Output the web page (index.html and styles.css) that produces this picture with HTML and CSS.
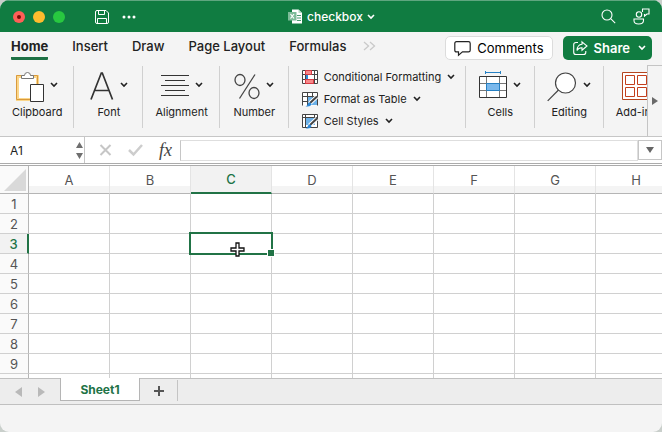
FILE: index.html
```html
<!DOCTYPE html>
<html lang="en">
<head>
<meta charset="utf-8">
<title>checkbox</title>
<link rel="stylesheet" href="styles.css">
</head>
<body>
<svg class="defs">
  <symbol id="chev" viewBox="0 0 8 6"><path d="M1 1l3 3 3-3" fill="none" stroke="currentColor" stroke-width="1.6"/></symbol>
</svg>
<div class="window">
  <header class="titlebar">
    <div class="lead">
      <div class="lights">
        <button class="light close" aria-label="Close"></button>
        <button class="light minimize" aria-label="Minimize"></button>
        <button class="light full" aria-label="Full screen"></button>
      </div>
      <div class="quick">
        <button class="bare" aria-label="Save"><svg width="14" height="14" viewBox="0 0 14 14" fill="none" stroke="#fff"><path d="M.5 2Q.5.5 2 .5h9L13.500 3v9q0 1.500-1.500 1.500H2Q.5 13.500.5 12zM3.500.5v4h6v-4M2.500 13.500v-5h9v5"/></svg></button>
        <button class="bare" aria-label="More"><svg width="14" height="4" viewBox="0 0 14 4" fill="#fff"><circle cx="2" cy="2" r="1.500"/><circle cx="7" cy="2" r="1.500"/><circle cx="12" cy="2" r="1.500"/></svg></button>
      </div>
    </div>
    <button class="doc bare">
      <svg width="15" height="15" viewBox="0 0 15 15"><path d="M4 .5h6.500L14 4v10.500H4z" fill="#fff"/><path d="M10.500.5V4H14" fill="#b9dcc8"/><path d="M9 6.500h4M9 9h4M9 11.500h4" stroke="#4b9b70"/><path d="M0 3h8.500v8.500H0z" fill="#7dbb98"/><path d="M2.500 5l3.500 4.500M6 5L2.500 9.500" stroke="#fff" stroke-width="1.200"/></svg>
      <span>checkbox</span>
      <svg class="chev" width="8" height="6"><use href="#chev"/></svg>
    </button>
    <div class="tools">
      <button class="bare" aria-label="Search"><svg width="15" height="15" viewBox="0 0 15 15" fill="none" stroke="#fff" stroke-width="1.100"><circle cx="6" cy="6" r="5"/><path d="M9.700 9.700l4.500 4.500"/></svg></button>
      <button class="bare" aria-label="Presence"><svg width="17" height="17" viewBox="0 0 17 17" fill="none" stroke="#fff" stroke-width="1.100"><circle cx="6" cy="6.500" r="2.700"/><path d="M1 11h9.500v1.500q0 3.500-4.800 3.500T1 12.500zM9.500 4V1H16v5h-2L11.500 8V6"/></svg></button>
    </div>
  </header>

  <div class="tabs">
    <nav class="tablist">
      <a href="#" class="active">Home</a><a href="#">Insert</a><a href="#">Draw</a><a href="#">Page Layout</a><a href="#">Formulas</a>
    </nav>
    <button class="bare overflow" aria-label="More tabs"><svg width="13" height="10" viewBox="0 0 13 10" fill="none" stroke="#c9c9c9" stroke-width="1.300"><path d="M1 1l4.500 4L1 9M7 1l4.500 4L7 9"/></svg></button>
    <div class="actions">
      <button class="comments"><svg width="17" height="15" viewBox="0 0 17 15" fill="none" stroke="#222" stroke-width="1.200"><path d="M2.500.7h12q1.700 0 1.700 1.700v6.800q0 1.700-1.700 1.700H8.500L4.500 14.200V10.900h-2Q.8 10.900.8 9.200V2.400Q.8.7 2.500.7z"/></svg><span>Comments</span></button>
      <button class="share"><svg width="15" height="14" viewBox="0 0 15 14" fill="none" stroke="#fff" stroke-width="1.100"><path d="M5 1.500H3Q.7 1.500.7 3.800v7.400q0 2.300 2.300 2.300h7.500q2.300 0 2.300-2.300V10M9 .8l5 4.200-5 4.200V6.700Q5.500 6.500 4 9.500 4.300 3.700 9 3.300z"/></svg><span>Share</span><svg class="chev" width="8" height="6"><use href="#chev"/></svg></button>
    </div>
  </div>

  <div class="ribbon">
    <div class="groups">
      <button class="group"><span class="icon"><svg width="28" height="32" viewBox="0 0 28 32"><path d="M1.500 5.500h20v23h-20z" fill="#fff" stroke="#fbd68a" stroke-width="3"/><path d="M.5 4.500h21v24H.5z" fill="none" stroke="#d99a3c"/><path d="M5.500 7.500v-3h3q0-3 3-3t3 3h3v3z" fill="#fff" stroke="#777"/><path d="M14.500 13.500h13v17h-13z" fill="#fff" stroke="#333"/></svg><svg class="chev" width="8" height="6"><use href="#chev"/></svg></span><span>Clipboard</span></button>
      <button class="group"><span class="icon"><svg width="24" height="32" viewBox="0 0 24 32" fill="none" stroke="#333" stroke-width="1.700"><path d="M1 28.500L11.300 2h1L22.500 28.500M4.800 19.500h14.300"/></svg><svg class="chev" width="8" height="6"><use href="#chev"/></svg></span><span>Font</span></button>
      <button class="group"><span class="icon"><svg width="28" height="32" viewBox="0 0 28 32" stroke="#333"><path d="M0 4.500h28M4 9.500h20M0 14.500h28M4 19.500h20M0 24.500h28"/></svg><svg class="chev" width="8" height="6"><use href="#chev"/></svg></span><span>Alignment</span></button>
      <button class="group"><span class="icon"><svg width="26" height="32" viewBox="0 0 26 32" fill="none" stroke="#444" stroke-width="1.300"><ellipse cx="6" cy="9" rx="5" ry="5.500"/><ellipse cx="20" cy="22" rx="5" ry="5.500"/><path d="M21 3.500L5.500 27.500"/></svg><svg class="chev" width="8" height="6"><use href="#chev"/></svg></span><span>Number</span></button>
      <div class="stack">
        <button class="line"><svg width="16" height="14" viewBox="0 0 16 14"><path d="M.5.5h15v13H.5z" fill="#fff"/><path d="M3.500.5h6v4h-6zM3.500 9.500h8v4h-8z" fill="#f58a8a" stroke="#d93a45"/><path d="M3 5h3v4H3z" fill="#2b88d8"/><path d="M.5.5h15v13H.5zM.5 4.500h15M.5 9.500h15M3.500.5v13M12.500.5v13" fill="none" stroke="#444"/><path d="M3.500.5h6v4h-6zM3.500 9.500h8v4h-8z" fill="#f58a8a" stroke="#d93a45"/></svg><span>Conditional Formatting</span><svg class="chev" width="8" height="6"><use href="#chev"/></svg></button>
        <button class="line"><svg width="16" height="15" viewBox="0 0 16 15"><path d="M.5.5h15v13H.5z" fill="#fff"/><path d="M5 5h10v8H5z" fill="#6cb1e8"/><path d="M.5 13.500V.5h15v13M.5 4.500h15M.5 9.500h6M5.500.5v13M10.500.5v5" fill="none" stroke="#444"/><path d="M15 4.500L7.500 11.500" stroke="#fff" stroke-width="4"/><path d="M15 4.500L8 11" stroke="#444" stroke-width="2"/><path d="M8.500 10.500q-3 0-3 2.500-.5 1-2 1.200 5 1 6-2z" fill="#2b88d8"/></svg><span>Format as Table</span><svg class="chev" width="8" height="6"><use href="#chev"/></svg></button>
        <button class="line"><svg width="16" height="15" viewBox="0 0 16 15"><path d="M.5.5h15v13H.5z" fill="#fff"/><path d="M4 4h9v7H4z" fill="#6cb1e8"/><path d="M.5 13.500V.5h15v13zM.5 3.500h15M3.500.5v13M12.500.5v4" fill="none" stroke="#444"/><path d="M15 4.500L7.500 11.500" stroke="#fff" stroke-width="4"/><path d="M15 4.500L8 11" stroke="#444" stroke-width="2"/><path d="M8.500 10.500q-3 0-3 2.500-.5 1-2 1.200 5 1 6-2z" fill="#2b88d8"/></svg><span>Cell Styles</span><svg class="chev" width="8" height="6"><use href="#chev"/></svg></button>
      </div>
      <button class="group"><span class="icon"><svg width="28" height="32" viewBox="0 0 28 32" fill="none"><path d="M.5 5.500h27v21H.5z" fill="#fff"/><path d="M7.500 12.500h13v7h-13z" fill="#7ab8ec"/><path d="M.5 12.500h27M.5 19.500h27M7.500 5.500v21M20.500 5.500v21" stroke="#777"/><path d="M.5 5.500h27v21H.5z" stroke="#333"/><path d="M7.500 12.500h13v7h-13zM6.500 1.500h15M6.500 0v3M21.500 0v3" stroke="#2580c3"/></svg><svg class="chev" width="8" height="6"><use href="#chev"/></svg></span><span>Cells</span></button>
      <button class="group"><span class="icon"><svg width="30" height="32" viewBox="0 0 30 32" stroke="#444" stroke-width="1.200"><circle cx="18.500" cy="12" r="10" fill="#fff"/><path d="M11.500 19L.7 29.800"/></svg><svg class="chev" width="8" height="6"><use href="#chev"/></svg></span><span>Editing</span></button>
      <button class="group addins"><span class="icon"><svg width="28" height="32" viewBox="0 0 28 32" fill="#fff" stroke="#c43e1c"><path d="M.5 1.500h27v27H.5z" stroke="#b5451f"/><path d="M3.500 4.500h9v9h-9zM15.500 4.500h9v9h-9zM3.500 16.500h9v9h-9zM15.500 16.500h9v9h-9z"/></svg></span><span>Add-ins</span></button>
    </div>
    <button class="scroller" aria-label="Scroll ribbon"><svg width="6" height="8" viewBox="0 0 6 8"><path d="M0 0l6 4-6 4z" fill="#6a6a6a"/></svg></button>
  </div>

  <div class="formula">
    <div class="namebox">
      <input value="A1" aria-label="Name box">
      <svg width="7" height="17" viewBox="0 0 7 17" fill="#6f6f6f"><path d="M3.500 0L7 6H0zM0 11h7l-3.500 6z"/></svg>
    </div>
    <div class="fx">
      <button class="bare" aria-label="Cancel"><svg width="13" height="12" viewBox="0 0 13 12" stroke="#c6c6c6" stroke-width="2"><path d="M1.500 1l10 10M11.500 1l-10 10"/></svg></button>
      <button class="bare" aria-label="Enter"><svg width="15" height="12" viewBox="0 0 15 12" fill="none" stroke="#cdcdcd" stroke-width="2.500"><path d="M1 6l4.500 4.500L14 1"/></svg></button>
      <button class="bare fxlabel">fx</button>
    </div>
    <input class="entry" aria-label="Formula">
    <button class="expand" aria-label="Expand formula bar"><svg width="8" height="6" viewBox="0 0 8 6"><path d="M0 0h8L4 6z" fill="#666"/></svg></button>
  </div>

  <main class="grid">
    <table>
      <thead><tr><th class="corner"><svg width="22" height="22" viewBox="0 0 22 22"><path d="M22 0v22H0z" fill="#d9d9d9"/></svg></th><th>A</th><th>B</th><th class="sel">C</th><th>D</th><th>E</th><th>F</th><th>G</th><th>H</th></tr></thead>
      <tbody>
        <tr><th>1</th><td></td><td></td><td></td><td></td><td></td><td></td><td></td><td></td></tr>
        <tr><th>2</th><td></td><td></td><td></td><td></td><td></td><td></td><td></td><td></td></tr>
        <tr><th class="sel">3</th><td></td><td></td><td class="current"><div class="selection"><i class="handle"></i><svg class="cursor" width="15" height="15" viewBox="0 0 15 15"><path d="M6 1h3v5h5v3H9v5H6V9H1V6h5z" fill="#fff" stroke="#111" stroke-width="1.300"/></svg></div></td><td></td><td></td><td></td><td></td><td></td></tr>
        <tr><th>4</th><td></td><td></td><td></td><td></td><td></td><td></td><td></td><td></td></tr>
        <tr><th>5</th><td></td><td></td><td></td><td></td><td></td><td></td><td></td><td></td></tr>
        <tr><th>6</th><td></td><td></td><td></td><td></td><td></td><td></td><td></td><td></td></tr>
        <tr><th>7</th><td></td><td></td><td></td><td></td><td></td><td></td><td></td><td></td></tr>
        <tr><th>8</th><td></td><td></td><td></td><td></td><td></td><td></td><td></td><td></td></tr>
        <tr><th>9</th><td></td><td></td><td></td><td></td><td></td><td></td><td></td><td></td></tr>
        <tr><th></th><td></td><td></td><td></td><td></td><td></td><td></td><td></td><td></td></tr>
      </tbody>
    </table>
  </main>

  <div class="sheets">
    <div class="pager">
      <button class="bare" aria-label="Previous sheet"><svg width="7" height="10" viewBox="0 0 7 10"><path d="M7 0v10L0 5z" fill="#b9b9b9"/></svg></button>
      <button class="bare" aria-label="Next sheet"><svg width="7" height="10" viewBox="0 0 7 10"><path d="M0 0v10l7-5z" fill="#b9b9b9"/></svg></button>
    </div>
    <button class="sheet">Sheet1</button>
    <button class="add" aria-label="Add sheet"><svg width="10" height="10" viewBox="0 0 10 10" stroke="#555" stroke-width="2"><path d="M5 0v10M0 5h10"/></svg></button>
  </div>
  <footer class="status"></footer>
</div>
</body>
</html>
```
FILE: styles.css
```css
* { box-sizing: border-box; }

body {
  margin: 0;
  background: #c9cfcb;
  font-family: Inter, "Liberation Sans", sans-serif;
  color: #222;
}

button, input { font: inherit; color: inherit; }
button { margin: 0; cursor: default; }
svg { display: block; flex: none; overflow: visible; }
.defs { display: none; }

.bare {
  display: flex;
  align-items: center;
  padding: 0;
  border: 0;
  background: none;
}

.window {
  display: flex;
  flex-direction: column;
  height: 100vh;
  border-radius: 9px;
  overflow: hidden;
  background: #f4f4f4;
}

/* Title bar */
.titlebar {
  display: grid;
  grid-template-columns: 1fr auto 1fr;
  align-items: center;
  height: 32px;
  padding: 0 12px 0 13px;
  background: #107c41;
  border-top: 1px solid #5fa67f;
  color: #fff;
}
.lead { display: flex; align-items: center; }
.lights { display: flex; gap: 8px; }
.light {
  display: grid;
  place-items: center;
  width: 12px;
  height: 12px;
  padding: 0;
  border: 0;
  border-radius: 50%;
}
.close { background: #ff5f57; }
.close::after {
  content: "";
  width: 4px;
  height: 4px;
  border-radius: 50%;
  background: #7a0a05;
}
.minimize { background: #febc2e; }
.full { background: #28c840; }
.quick { display: flex; gap: 13px; padding-left: 30px; }
.doc { gap: 4px; font-size: 12px; font-weight: 500; line-height: 16px; }
.tools { display: flex; gap: 17px; justify-content: flex-end; }

/* Ribbon tabs */
.tabs {
  display: flex;
  align-items: flex-start;
  height: 33px;
  padding: 4px 10px 0 11px;
}
.tablist { display: flex; gap: 24px; margin-right: 17px; }
.tablist a {
  padding: 1px 0 2px;
  border-bottom: 3px solid transparent;
  color: #222;
  font-size: 13px;
  font-weight: 500;
  line-height: 18px;
  text-decoration: none;
}
.tablist .active { border-color: #1e7145; border-radius: 1px; font-weight: 700; }
.overflow { height: 20px; }
.actions { display: flex; gap: 10px; margin-left: auto; }
.actions button {
  display: flex;
  align-items: center;
  height: 24px;
  border-radius: 5px;
  font-size: 13px;
}
.comments {
  gap: 6px;
  padding: 0 8px;
  border: 1px solid #dcdcdc;
  background: #fff;
  color: #000;
}
.share {
  gap: 6px;
  padding: 0 6px 0 10px;
  border: 0;
  background: #107c41;
  color: #fff;
}
.actions .share { color: #fff; font-weight: 600; }
.share .chev { margin-left: 2px; }

/* Ribbon */
.ribbon { display: flex; height: 71px; color: #333; }
.groups { display: flex; flex: 1; min-width: 0; overflow: hidden; padding: 1px 0 8px; }
.group {
  display: flex;
  flex: none;
  flex-direction: column;
  align-items: center;
  min-width: 69px;
  padding: 5px 11px 0 12px;
  border: 0;
  border-right: 1px solid #d0d0d0;
  background: none;
  color: #222;
  font-size: 11px;
  line-height: 14px;
}
.icon { display: flex; align-items: center; gap: 6px; height: 32px; margin-bottom: 2px; }
.icon .chev { margin-bottom: 4px; }
.addins { border: 0; align-items: flex-start; }
.addins .icon { padding-left: 6px; }
.stack {
  display: flex;
  flex: none;
  flex-direction: column;
  width: 177px;
  padding-left: 13px;
  border-right: 1px solid #d0d0d0;
}
.line {
  display: flex;
  flex: none;
  align-items: center;
  gap: 6px;
  height: 22px;
  padding: 0;
  border: 0;
  background: none;
  color: #222;
  font-size: 11px;
}
.scroller {
  display: grid;
  place-items: center;
  width: 15px;
  padding: 0;
  border: 1px solid #c4c4c4;
  border-width: 1px 0 0 1px;
  background: #f4f4f4;
}

/* Formula bar */
.formula {
  display: flex;
  align-items: center;
  height: 30px;
  border-top: 1px solid #c6c6c6;
  border-bottom: 3px double #ababab;
  background: #fff;
}
.namebox {
  display: flex;
  align-items: center;
  align-self: stretch;
  width: 85px;
  padding: 0 1px 0 10px;
  border-right: 1px solid #c6c6c6;
}
.namebox input {
  flex: 1;
  min-width: 0;
  padding: 0;
  border: 0;
  background: none;
  font-size: 12px;
}
.fx { display: flex; align-items: center; gap: 16px; width: 95px; padding-left: 14px; }
.fxlabel { color: #444; font: italic 18px/20px "Liberation Serif", serif; }
.entry {
  flex: 1;
  min-width: 0;
  height: 21px;
  border: 1px solid #dedede;
  border-left-color: #c6c6c6;
  background: #fff;
}
.expand {
  display: grid;
  place-items: center;
  width: 24px;
  height: 20px;
  padding: 0;
  border: 1px solid #c6c6c6;
  background: #fff;
}

/* Cells */
.grid { flex: 1; min-height: 0; overflow: hidden; background: #fff; }
.grid table { width: 677px; border-collapse: separate; border-spacing: 0; table-layout: fixed; }
.grid th, .grid td {
  height: 20px;
  padding: 0;
  border: 1px solid #d0d0d0;
  border-width: 0 1px 1px 0;
}
.grid th { color: #555; font-size: 13px; font-weight: 400; line-height: 18px; }
.grid thead th {
  height: 28px;
  border-right-color: #e4e4e4;
  border-bottom-color: #b5b5b5;
  background: linear-gradient(#fff 75%, #f4f4f4 75%);
}
.grid thead .corner { width: 29px; border-right-color: #b5b5b5; background: #fafafa; }
.corner svg { margin: 0 2px 0 auto; }
.grid tbody th { border-right-color: #b5b5b5; background: #fafafa; }
.grid thead .sel { border-bottom: 2px solid #217346; background: #f2f2f2; color: #217346; font-weight: 500; }
.grid tbody .sel { border-right: 2px solid #217346; background: #f2f2f2; color: #217346; font-weight: 500; }
.current { position: relative; }
.selection {
  position: absolute;
  inset: -2px;
  border: 2px solid #217346;
}
.handle {
  position: absolute;
  right: -3px;
  bottom: -3px;
  width: 6px;
  height: 6px;
  background: #217346;
  box-shadow: 0 0 0 1px #fff;
}
.cursor { position: absolute; left: 39px; top: 8px; }

/* Sheet tabs */
.sheets {
  display: flex;
  height: 27px;
  border-top: 1px solid #c0c0c0;
  border-bottom: 1px solid #c0c0c0;
  background: #ededed;
}
.pager { display: flex; align-items: center; gap: 16px; width: 60px; padding-left: 15px; }
.sheet {
  width: 80px;
  height: 23px;
  margin-top: -1px;
  padding: 0;
  border: 1px solid #b5b5b5;
  border-top: 0;
  background: #fff;
  color: #217346;
  font-size: 12px;
  font-weight: 700;
}
.add {
  display: grid;
  place-items: center;
  width: 38px;
  height: 21px;
  margin-top: 1px;
  padding: 0;
  border: 0;
  border-right: 1px solid #c4c4c4;
  background: none;
}
.status { height: 27px; }
```
